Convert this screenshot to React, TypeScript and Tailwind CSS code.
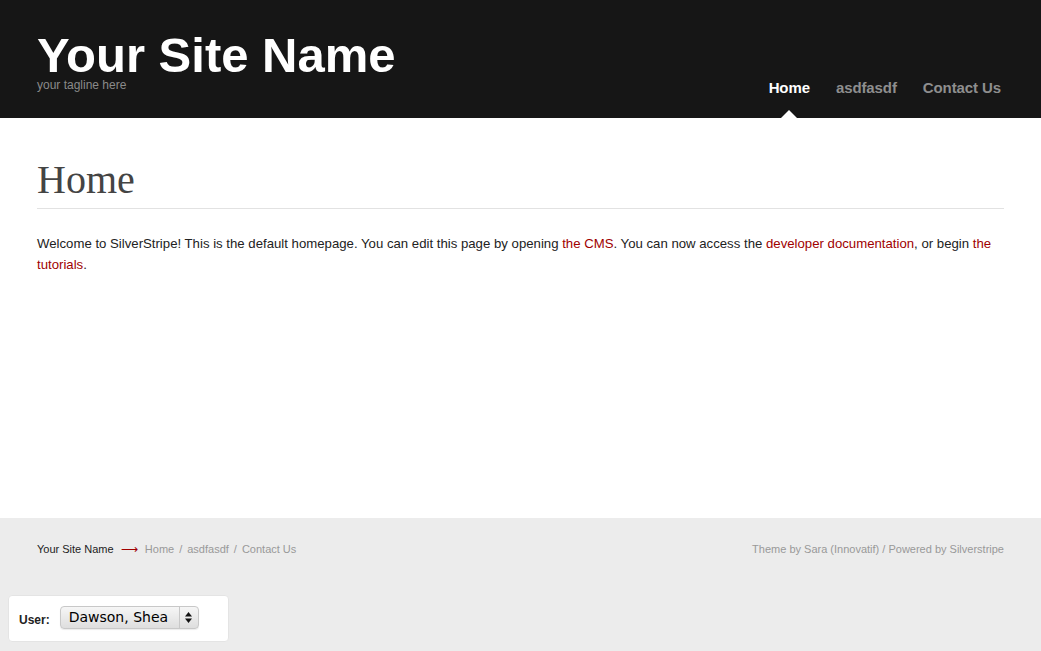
import React from "react";

const Styles = {
  sans: "font-['Liberation_Sans',Arial,sans-serif]",
  link: "text-[#a00000] hover:underline",
};

const navItems = [
  { label: "Home", active: true },
  { label: "asdfasdf", active: false },
  { label: "Contact Us", active: false },
];

function Header() {
  return (
    <header className="bg-[#161616] h-[118px] px-[37px] flex items-end justify-between">
      <div className="pb-[26px]">
        <h1 className="text-white font-bold text-[49px] leading-[40px] pb-[3px]">
          Your Site Name
        </h1>
        <p className="text-[#8a8a8a] text-[12px] leading-[14px]">
          your tagline here
        </p>
      </div>
      <nav className="flex gap-[26px] pr-[3px]">
        {navItems.map((item) => (
          <a
            key={item.label}
            href="#"
            className={`relative text-[15px] font-bold leading-[18px] pb-[21px] tracking-[-0.1px] ${
              item.active ? "text-white" : "text-[#8e8e8e]"
            }`}
          >
            {item.label}
            {item.active && (
              <span className="absolute bottom-0 left-1/2 -translate-x-1/2 w-0 h-0 border-x-[8px] border-x-transparent border-b-[8px] border-b-white" />
            )}
          </a>
        ))}
      </nav>
    </header>
  );
}

function Content() {
  return (
    <main className="bg-white h-[400px] px-[37px] pt-[38px]">
      <h2 className="font-['Liberation_Serif','Times_New_Roman',serif] text-[40px] leading-[48px] text-[#444] pb-[4px] border-b border-[#e2e2e2]">
        Home
      </h2>
      <p className="mt-[24px] text-[13.2px] leading-[21px] text-[#222]">
        Welcome to SilverStripe! This is the default homepage. You can edit this
        page by opening{" "}
        <a href="#" className={Styles.link}>
          the CMS
        </a>
        . You can now access the{" "}
        <a href="#" className={Styles.link}>
          developer documentation
        </a>
        , or begin{" "}
        <a href="#" className={Styles.link}>
          the tutorials
        </a>
        .
      </p>
    </main>
  );
}

function Footer() {
  return (
    <footer className="bg-[#ececec] flex-1 px-[37px] pt-[24px]">
      <div className="flex justify-between items-center text-[11px] leading-[14px]">
        <div className="flex items-center">
          <span className="text-[#222]">Your Site Name</span>
          <span className="font-['DejaVu_Sans',sans-serif] text-[#a00000] mx-[7px] text-[12px]">
            &#x27F6;
          </span>
          <a href="#" className="text-[#999]">Home</a>
          <span className="text-[#999] mx-[5px]">/</span>
          <a href="#" className="text-[#999]">asdfasdf</a>
          <span className="text-[#999] mx-[5px]">/</span>
          <a href="#" className="text-[#999]">Contact Us</a>
        </div>
        <div className="text-[#999]">
          Theme by Sara (Innovatif) / Powered by Silverstripe
        </div>
      </div>
    </footer>
  );
}

function UserSwitcher() {
  return (
    <div className="fixed left-[8px] top-[595px] w-[221px] h-[47px] bg-white border border-[#e4e4e4] rounded-[4px] flex items-center pl-[10px] gap-[10px]">
      <span className="text-[12px] font-bold text-[#222] mt-[3px]">User:</span>
      <div className="relative w-[139px] h-[23px] -mt-[3px] rounded-[4px] border border-[#c8c8c8] bg-gradient-to-b from-[#f6f6f6] to-[#dedede] flex items-center shadow-[0_1px_1px_rgba(0,0,0,0.08)]">
        <span className="font-['DejaVu_Sans',sans-serif] text-[14px] text-black pl-[8px] flex-1 leading-[20px]">
          Dawson, Shea
        </span>
        <span className="w-[19px] h-full border-l border-[#c8c8c8] flex items-center justify-center">
          <svg width="7" height="11" viewBox="0 0 7 11">
            <path d="M3.5 0 L7 4.5 H0 Z" fill="#111" />
            <path d="M3.5 11 L7 6.5 H0 Z" fill="#111" />
          </svg>
        </span>
      </div>
    </div>
  );
}

export default function App() {
  return (
    <div className={`${Styles.sans} min-h-screen flex flex-col`}>
      <Header />
      <Content />
      <Footer />
      <UserSwitcher />
    </div>
  );
}
